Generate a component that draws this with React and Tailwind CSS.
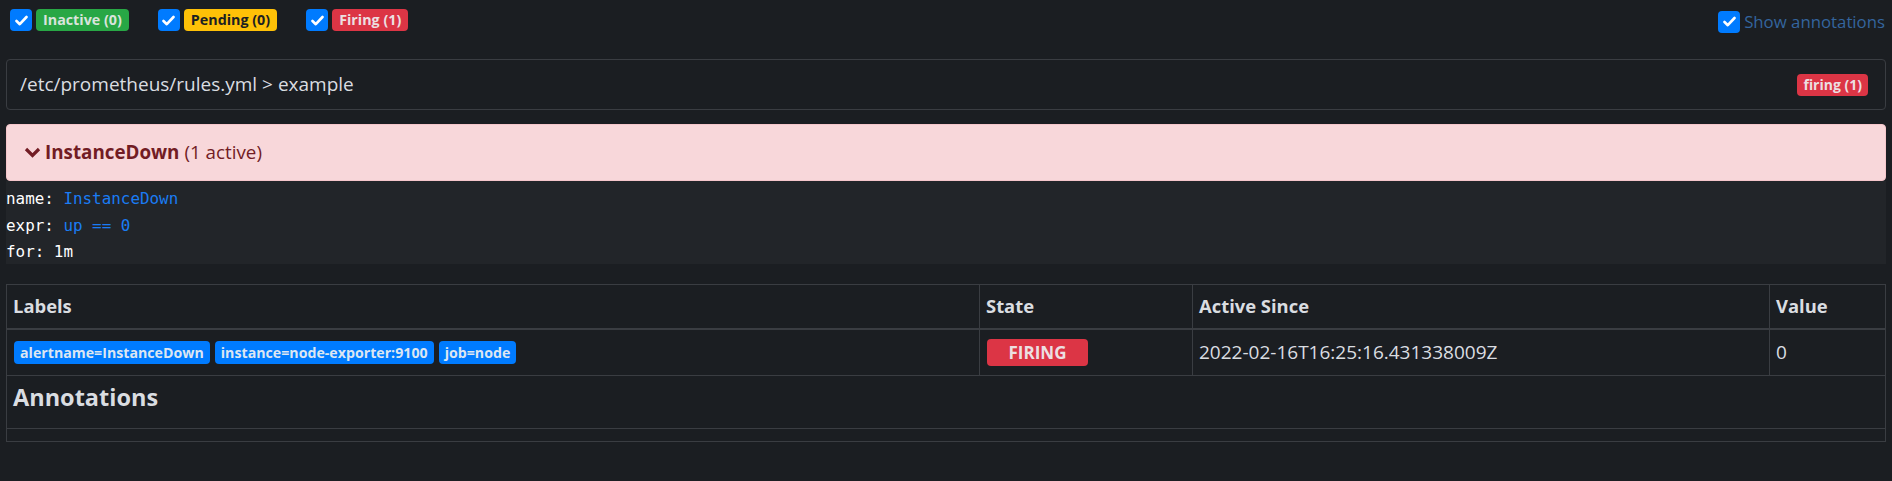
import React from 'react';

const sans = { fontFamily: '"Open Sans", "Noto Sans", sans-serif' };

function Check({ className = '' }) {
    return (
        <span className={`inline-flex h-[22px] w-[22px] items-center justify-center rounded-[4px] bg-[#007bff] ${className}`}>
            <svg width="13" height="11" viewBox="0 0 13 11" fill="none">
                <path d="M1.5 6l3.3 3.2L11.5 2" stroke="#fff" strokeWidth="2.6" strokeLinecap="round" strokeLinejoin="round" />
            </svg>
        </span>
    );
}

function Filter({ label, color }) {
    return (
        <label className="flex items-center gap-[4px]">
            <Check />
            <span className={`rounded-[4px] px-[7px] h-[22px] leading-[22px] text-[14.3px] font-bold ${color}`}>{label}</span>
        </label>
    );
}

const labels = ['alertname=InstanceDown', 'instance=node-exporter:9100', 'job=node'];

export default function App() {
    return (
        <div className="min-h-[481px] bg-[#1b1e22] px-[6px] text-[#dadde1]" style={sans}>
            {/* filter row */}
            <div className="flex h-[40px] items-start justify-between pl-[4px] pt-[9px]">
                <div className="flex gap-[29px]">
                    <Filter label="Inactive (0)" color="bg-[#28a745] text-[#d9e4dc]" />
                    <Filter label="Pending (0)" color="bg-[#ffc107] text-[#1d1f22]" />
                    <Filter label="Firing (1)" color="bg-[#dc3545] text-[#ecdfe1]" />
                </div>
                <label className="flex items-center gap-[4px] pr-[1px]">
                    <Check />
                    <span className="text-[16.8px] text-[#34659e]">Show annotations</span>
                </label>
            </div>

            {/* rule group */}
            <div className="mt-[19px] flex h-[51px] items-center justify-between rounded-[4px] border border-[#3a3d42] pl-[13px] pr-[17px]">
                <span className="text-[19px]">/etc/prometheus/rules.yml &gt; example</span>
                <span className="rounded-[4px] bg-[#dc3545] px-[6px] h-[22px] leading-[22px] text-[14px] font-bold text-[#ecdfe1]">firing (1)</span>
            </div>

            {/* alert */}
            <div className="mt-[14px] flex h-[57px] items-center rounded-[4px] border border-[#f5c6cb] bg-[#f8d7da] pl-[17px] text-[18.8px] text-[#721c24]">
                <svg width="17" height="11" viewBox="0 0 17 11" className="mr-[4px]">
                    <path d="M2 2l6.5 6.5L15 2" stroke="#721c24" strokeWidth="3.2" fill="none" />
                </svg>
                <span className="font-bold">InstanceDown</span>
                <span className="ml-[5px]">(1 active)</span>
            </div>

            <pre
                className="h-[83px] bg-[#222529] pt-[5px] text-[15.9px] leading-[26.5px] text-white"
                style={{ fontFamily: '"DejaVu Sans Mono", "Liberation Mono", monospace' }}
            >
                <div>name: <span className="text-[#1a7cf4]">InstanceDown</span></div>
                <div>expr: <span className="text-[#1a7cf4]">up == 0</span></div>
                <div>for: 1m</div>
            </pre>

            {/* alerts table */}
            <table className="mt-[20px] w-full table-fixed border-collapse border border-[#3a3d42] text-[19px]">
                <colgroup>
                    <col className="w-[973px]" />
                    <col className="w-[213px]" />
                    <col className="w-[577px]" />
                    <col />
                </colgroup>
                <thead>
                    <tr className="h-[44px] border-b-2 border-[#3a3d42] text-left text-[18.4px] font-bold">
                        <th className="border-r border-[#3a3d42] px-[6px]">Labels</th>
                        <th className="border-r border-[#3a3d42] px-[6px]">State</th>
                        <th className="border-r border-[#3a3d42] px-[6px]">Active Since</th>
                        <th className="px-[6px]">Value</th>
                    </tr>
                </thead>
                <tbody>
                    <tr className="h-[47px] border-b border-[#3a3d42]">
                        <td className="border-r border-[#3a3d42] px-[6px]">
                            <div className="flex gap-[5px] pl-[1px]">
                                {labels.map((l) => (
                                    <span key={l} className="h-[23px] rounded-[4px] bg-[#007bff] px-[6px] text-[14.2px] leading-[23px] font-bold text-[#dce6f2]">
                                        {l}
                                    </span>
                                ))}
                            </div>
                        </td>
                        <td className="border-r border-[#3a3d42] px-[6px]">
                            <span className="ml-[1px] inline-flex h-[27px] w-[101px] items-center justify-center rounded-[4px] bg-[#dc3545] text-[17px] font-bold text-[#ecdfe1]">
                                FIRING
                            </span>
                        </td>
                        <td className="border-r border-[#3a3d42] px-[6px]">2022-02-16T16:25:16.431338009Z</td>
                        <td className="px-[6px]">0</td>
                    </tr>
                    <tr className="h-[53px] border-b border-[#3a3d42]">
                        <td colSpan={4} className="px-[6px] pb-[8px] align-middle">
                            <h5 className="text-[23.5px] font-bold">Annotations</h5>
                        </td>
                    </tr>
                    <tr className="h-[13px]">
                        <td colSpan={4}></td>
                    </tr>
                </tbody>
            </table>
        </div>
    );
}
